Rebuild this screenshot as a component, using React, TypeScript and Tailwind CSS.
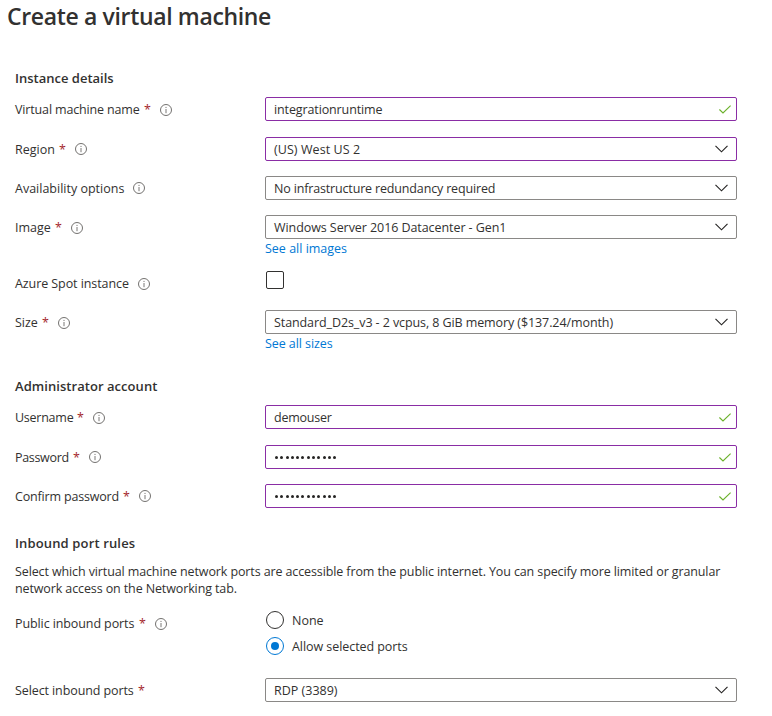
import type { ReactNode } from "react";

function InfoIcon({ className = "" }: { className?: string }) {
  return (
    <svg width="12" height="12" viewBox="0 0 12 12" fill="none" className={`shrink-0 ${className}`}>
      <circle cx="6" cy="6" r="5.5" stroke="#6b6967" strokeWidth="0.95" />
      <path d="M6 5v4.2M6 2.9v1.1" stroke="#7a7876" strokeWidth="1" />
    </svg>
  );
}

function Chevron() {
  return (
    <svg width="13" height="8" viewBox="0 0 13 8" fill="none" className="mr-2 shrink-0">
      <path d="M0.5 0.8L6.5 6.8L12.5 0.8" stroke="#252423" strokeWidth="1.15" />
    </svg>
  );
}

function Check() {
  return (
    <svg width="12" height="9" viewBox="0 0 12 9" fill="none" className="mr-[5px] shrink-0">
      <path d="M0.4 4.5L4 7.9L11.6 0.6" stroke="#6bb12b" strokeWidth="1.15" />
    </svg>
  );
}

type LabelProps = {
  text: string;
  width: string;
  tracking?: string;
  iconClass?: string;
  required?: boolean;
  info?: boolean;
};

function Label({ text, width, tracking = "", iconClass = "", required = false, info = true }: LabelProps) {
  return (
    <div className="flex h-6 w-[250px] shrink-0 items-center whitespace-nowrap">
      <div className={`mt-0.5 flex shrink-0 justify-between ${width}`}>
        <span className={tracking}>{text}</span>
        {required && <span className="w-[7px] text-[#a4262c]">*</span>}
      </div>
      {info && <InfoIcon className={iconClass} />}
    </div>
  );
}

type BoxProps = { children: ReactNode; tracking?: string; changed?: boolean; valid?: boolean };

function Box({ children, tracking = "", changed = false, valid = false }: BoxProps) {
  return (
    <div
      className={`flex h-6 w-[472px] items-center justify-between rounded-[2px] border bg-white pl-2 whitespace-nowrap ${
        changed ? "border-[#8a2da5]" : "border-[#8a8886]"
      }`}
    >
      <div className={`mt-0.5 ${tracking}`}>{children}</div>
      {valid ? <Check /> : <Chevron />}
    </div>
  );
}

function Dots() {
  return (
    <div className="-mt-0.5 flex gap-[2.3px] pl-[1px]">
      {Array.from({ length: 12 }, (_, i) => (
        <span key={i} className="size-[3px] rounded-full bg-[#252423]" />
      ))}
    </div>
  );
}

function Heading({ children, className }: { children: ReactNode; className: string }) {
  return <h2 className={`h-5 text-[13px] leading-5 font-semibold whitespace-nowrap ${className}`}>{children}</h2>;
}

export default function App() {
  return (
    <main className="h-[716px] w-[772px] overflow-hidden bg-white font-['Open_Sans','Noto_Sans',sans-serif] text-[12.5px] leading-4 text-[#323130]">
      <h1 className="h-8 pl-[7px] text-[23px] leading-8 font-semibold tracking-[-0.35px] whitespace-nowrap">
        Create a virtual machine
      </h1>
      <div className="pl-[15px]">
        <Heading className="mt-9">Instance details</Heading>
        <div className="mt-[9px] flex">
          <Label text="Virtual machine name" tracking="tracking-[-0.15px]" width="w-[145px] pr-[9px]" iconClass="mt-0.5" required />
          <Box changed valid tracking="tracking-[-0.12px]">integrationruntime</Box>
        </div>
        <div className="mt-4 flex">
          <Label text="Region" width="w-[60px] pr-[9px]" required />
          <Box changed tracking="tracking-[0.07px]">(US) West US 2</Box>
        </div>
        <div className="mt-[15px] flex">
          <Label text="Availability options" width="w-[118px]" />
          <Box tracking="tracking-[-0.16px]">No infrastructure redundancy required</Box>
        </div>
        <div className="mt-[15px] flex">
          <Label text="Image" width="w-[56px] pr-[9px]" iconClass="mt-0.5" required />
          <Box tracking="tracking-[-0.07px]">Windows Server 2016 Datacenter - Gen1</Box>
        </div>
        <a className="ml-[250px] block h-5 leading-5 text-[#0078d4]">See all images</a>
        <div className="mt-3 flex">
          <Label text="Azure Spot instance" tracking="tracking-[-0.08px]" width="w-[123px]" iconClass="mt-0.5" />
          <div className="ml-px size-[18px] rounded-[2px] border border-[#323130]" />
        </div>
        <div className="mt-[15px] flex">
          <Label text="Size" width="w-[43px] pr-[9px]" iconClass="mt-0.5" required />
          <Box tracking="tracking-[-0.09px]">Standard_D2s_v3 - 2 vcpus, 8 GiB memory ($137.24/month)</Box>
        </div>
        <a className="ml-[250px] block h-5 leading-5 tracking-[-0.07px] text-[#0078d4]">See all sizes</a>

        <Heading className="mt-[22px] tracking-[0.05px]">Administrator account</Heading>
        <div className="mt-[9px] flex">
          <Label text="Username" tracking="tracking-[-0.25px]" width="w-[78px] pr-[9px]" iconClass="mt-0.5" required />
          <Box changed valid tracking="tracking-[-0.25px]">demouser</Box>
        </div>
        <div className="mt-4 flex">
          <Label text="Password" tracking="tracking-[-0.32px]" width="w-[74px] pr-[9px]" required />
          <Box changed valid><Dots /></Box>
        </div>
        <div className="mt-[15px] flex">
          <Label text="Confirm password" tracking="tracking-[-0.18px]" width="w-[124px] pr-[9px]" required />
          <Box changed valid><Dots /></Box>
        </div>

        <Heading className="mt-[25px] tracking-[0.14px]">Inbound port rules</Heading>
        <p className="mt-[10px] leading-[17px] tracking-[-0.115px] whitespace-nowrap">
          Select which virtual machine network ports are accessible from the public internet. You can specify more limited or granular
          <br />
          network access on the Networking tab.
        </p>
        <div className="mt-[14px] flex">
          <Label text="Public inbound ports" tracking="tracking-[-0.1px]" width="w-[140px] pr-[9px]" iconClass="mt-0.5" required />
          <div className="ml-px flex flex-col gap-2">
            <div className="flex h-[18px] items-center gap-2">
              <span className="size-[18px] rounded-full border border-[#323130]" />
              <span className="mt-0.5">None</span>
            </div>
            <div className="flex h-[18px] items-center gap-2">
              <span className="flex size-[18px] items-center justify-center rounded-full border border-[#0078d4]">
                <span className="size-2 rounded-full bg-[#0078d4]" />
              </span>
              <span className="mt-0.5 tracking-[-0.06px]">Allow selected ports</span>
            </div>
          </div>
        </div>
        <div className="mt-[23px] flex">
          <Label text="Select inbound ports" tracking="tracking-[-0.1px]" width="w-[130px]" required info={false} />
          <Box>RDP (3389)</Box>
        </div>
      </div>
    </main>
  );
}
